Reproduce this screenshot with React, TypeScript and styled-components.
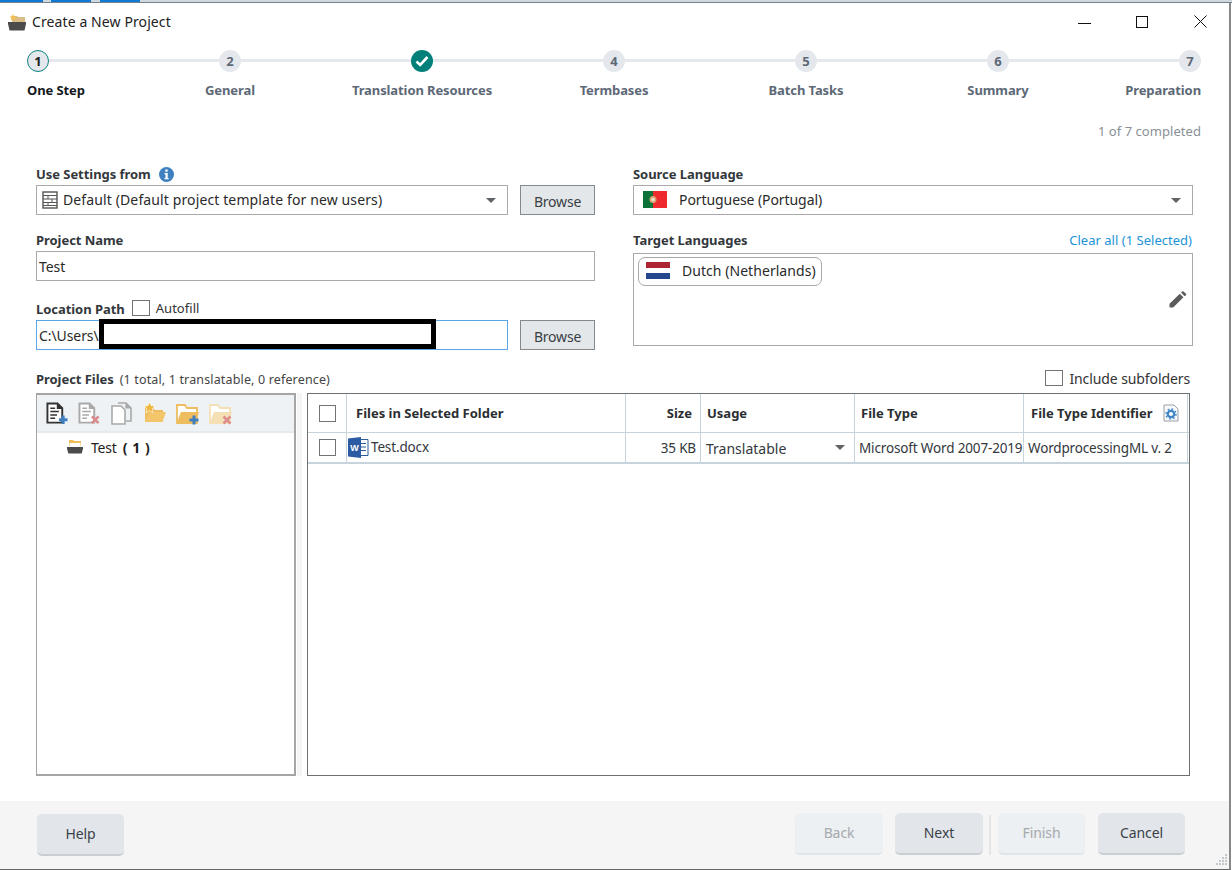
import React from "react";
import styled, { createGlobalStyle } from "styled-components";

const Global = createGlobalStyle`
  html, body { margin: 0; padding: 0; background: #fff; }
  body { font-family: "Noto Sans", "Open Sans", "Liberation Sans", sans-serif; font-size: 14px; color: #222; overflow: hidden; }
  * { box-sizing: border-box; }
`;

const Win = styled.div`
  width: 1232px; height: 870px; display: flex; flex-direction: column; background: #fff;
`;
const TaskStrip = styled.div`
  height: 3px; flex: none; display: flex; background: #cfd8de; border-bottom: 1px solid #77838c;
`;
const TaskTab = styled.span<{ $w: number; $gap: number }>`
  width: ${p => p.$w}px; margin-right: ${p => p.$gap}px; background: #0f78d2;
`;
const Frame = styled.div`
  flex: 1; display: flex; flex-direction: column; border-right: 2px solid #888; border-bottom: 1px solid #666; height: 866px; width: 1231px;
`;
const TitleBar = styled.div`
  height: 37px; flex: none; display: flex; align-items: center; padding-left: 8px;
`;
const TitleText = styled.span`
  margin-left: 6px; font-size: 14px; letter-spacing: 0.1px; color: #222;
`;
const WinControls = styled.div`margin-left: auto; display: flex;`;
const WinBtn = styled.div`
  width: 58px; height: 37px; display: flex; align-items: center; justify-content: center;
`;
const Stepper = styled.div`
  margin: 10px 28px 0 27px; display: flex; justify-content: space-between; position: relative;
  &::before { content: ""; position: absolute; left: 10px; right: 10px; top: 9px; height: 3px; background: #e5e9ed; }
`;
const Step = styled.div<{ $align: string }>`
  width: 22px; display: flex; flex-direction: column; align-items: ${p => p.$align}; position: relative;
`;
const Dot = styled.div<{ $state: "active" | "done" | "todo" }>`
  width: 22px; height: 22px; border-radius: 50%; display: flex; align-items: center; justify-content: center;
  font-weight: 700; font-size: 13px;
  background: ${p => (p.$state === "done" ? "#01807a" : "#e4e8ec")};
  color: ${p => (p.$state === "active" ? "#222" : "#5d6876")};
  border: ${p => (p.$state === "active" ? "1.5px solid #0d8480" : "none")};
`;
const StepLabel = styled.div<{ $on: boolean }>`
  margin-top: 8px; line-height: 20px; font-size: 13px; font-weight: 700; white-space: nowrap; letter-spacing: -0.1px;
  color: ${p => (p.$on ? "#15181c" : "#5d6876")};
`;
const Progress = styled.div`
  margin: 21px 28px 0 0; text-align: right; line-height: 20px; font-size: 13px; color: #8a8f95; letter-spacing: 0.05px;
`;
const Form = styled.div`
  margin-top: 23px; padding-left: 36px; display: grid; grid-template-columns: 559px 560px; column-gap: 38px;
`;
const Col = styled.div`display: flex; flex-direction: column;`;
const Label = styled.div`
  font-size: 13px; font-weight: 700; line-height: 20px; color: #33373b; letter-spacing: -0.05px; display: flex; align-items: center; white-space: nowrap;
`;
const LabelRow = styled.div<{ $top: number; $bottom?: number }>`
  display: flex; align-items: center; justify-content: space-between; height: 20px; flex: none;
  margin-top: ${p => p.$top}px; margin-bottom: ${p => p.$bottom ?? 1}px;
`;
const LinkText = styled.span`font-size: 13px; color: #1b93d8; letter-spacing: 0.02px; margin-right: 1px;`;
const FieldRow = styled.div`display: flex; gap: 12px;`;
const Field = styled.div<{ $focus?: boolean; $grow?: boolean }>`
  flex: ${p => (p.$grow ? "1" : "none")}; height: 30px; display: flex; align-items: center; padding: 0 2px; background: #fff; position: relative;
  border: 1px solid ${p => (p.$focus ? "#5aa5e6" : "#a9a9a9")}; font-size: 14px; letter-spacing: -0.08px; color: #2a2a2a; white-space: nowrap;
`;
const SelectText = styled.span<{ $left: number; $wide?: boolean }>`
  margin-left: ${p => p.$left}px; display: flex; padding-bottom: 2px; letter-spacing: ${p => (p.$wide ? "0.12px" : "inherit")};
`;
const UsageText = styled.span`padding-top: 2px;`;
const Caret = styled.span`
  margin-left: auto; margin-right: 9px; width: 0; height: 0;
  border-left: 5px solid transparent; border-right: 5px solid transparent; border-top: 5px solid #606468;
`;
const Browse = styled.div`
  width: 75px; height: 30px; flex: none; display: flex; align-items: center; justify-content: center;
  background: #e3e7ea; border: 1px solid #85898c; font-size: 14px; letter-spacing: -0.2px; color: #3a3f44; padding-top: 2px;
`;
const Redaction = styled.div`
  position: absolute; left: 62px; top: -2px; width: 337px; height: 30px; border: 5px solid #000; background: #fff;
`;
const Check = styled.span<{ $w?: number; $h?: number }>`
  display: inline-block; flex: none; width: ${p => p.$w ?? 18}px; height: ${p => p.$h ?? 16}px; background: #fff; border: 1px solid #737373;
`;
const Autofill = styled.div`display: flex; align-items: center; gap: 6px; margin-left: 7px; font-size: 13px; font-weight: 400; letter-spacing: 0.05px; color: #333; height: 18px; margin-top: -3px;`;
const TargetBox = styled.div`
  height: 93px; border: 1px solid #a9a9a9; padding: 3px 4px; position: relative; flex: none;
`;
const Chip = styled.div`
  width: 184px; height: 29px; border: 1px solid #a9a9a9; border-radius: 7px; display: flex; align-items: center; padding: 0 0 2px 7px; font-size: 14px; letter-spacing: 0.05px; color: #2a2a2a; gap: 12px;
`;
const PencilSlot = styled.div`position: absolute; right: 5px; top: 37px;`;
const FilesHead = styled.div`
  margin-top: 19px; padding: 0 39px 0 36px; height: 20px; display: flex; align-items: center; flex: none;
`;
const FilesSub = styled.span`margin-left: 6px; font-size: 12.5px; letter-spacing: 0.15px; color: #444;`;
const IncludeSub = styled.div`
  margin-left: auto; display: flex; align-items: center; gap: 6px; padding-bottom: 2px; font-size: 14px; letter-spacing: -0.1px; color: #333;
`;
const Panels = styled.div`margin-top: 4px; padding-left: 36px; display: flex; height: 383px; flex: none;`;
const TreePanel = styled.div`width: 260px; border: 2px solid #a5a5a5; border-left-width: 1px; display: flex; flex-direction: column;`;
const Splitter = styled.div`width: 11px; padding: 0 5px 0 1px; &::after { content: ""; display: block; height: 100%; background: #f5f5f5; }`;
const TreeToolbar = styled.div`
  height: 38px; flex: none; background: #eff2f5; border-bottom: 2px solid #e5eaee; display: flex; align-items: center; padding-left: 9px; gap: 10px;
`;
const TreeRow = styled.div`
  margin-top: 4px; height: 20px; padding-left: 29px; display: flex; align-items: center; gap: 7px; font-size: 14px; letter-spacing: -0.2px; color: #222;
`;
const TreeCount = styled.b`margin-left: -1px; color: #1d1d1d; letter-spacing: 0.6px;`;
const TablePanel = styled.div`width: 883px; border: 1px solid #707070; display: flex; flex-direction: column;`;
const GridRow = styled.div<{ $h: number; $bb: number }>`
  display: grid; grid-template-columns: 39px 279px 75px 154px 169px 164px; height: ${p => p.$h}px; flex: none;
  border-bottom: ${p => p.$bb}px solid #c7d4dc;
`;
const Cell = styled.div<{ $right?: number; $pad?: number; $head?: boolean; $center?: boolean; $big?: boolean }>`
  border-right: 1px solid #c7d4dc; display: flex; align-items: center; min-width: 0; white-space: nowrap;
  padding: 0 ${p => p.$right ?? 0}px 0 ${p => p.$pad ?? 4}px;
  justify-content: ${p => (p.$right ? "flex-end" : p.$center ? "center" : "flex-start")};
  font-size: ${p => (p.$head ? 13 : p.$big ? 14 : 13.5)}px; font-weight: ${p => (p.$head ? 700 : 400)};
  color: ${p => (p.$head ? "#2b2e31" : "#33383d")}; letter-spacing: ${p => (p.$head ? 0 : p.$big ? 0 : -0.15)}px;
`;
const HeadGear = styled.span`margin-left: 10px; display: flex;`;
const Spacer = styled.div`flex: 1;`;
const Footer = styled.div`
  height: 68px; flex: none; background: #f5f5f5; display: flex; align-items: flex-start; padding: 12px 0 0 37px; position: relative;
`;
const FootBtn = styled.div<{ $off?: boolean; $mr?: number; $down?: boolean; $w?: number }>`
  width: ${p => p.$w ?? 88}px; height: 42px; border-radius: 5px; display: flex; align-items: center; justify-content: center; font-size: 14px; letter-spacing: -0.1px;
  margin-right: ${p => p.$mr ?? 0}px; margin-top: ${p => (p.$down ? 1 : 0)}px; padding-bottom: 2px;
  background: ${p => (p.$off ? "#edf0f2" : "#e2e6ea")};
  color: ${p => (p.$off ? "#a5a9ae" : "#3a4048")};
  border-bottom: 2px solid ${p => (p.$off ? "#e2e5e8" : "#c9ced3")};
`;
const FootGroup = styled.div`margin-left: auto; margin-right: 44px; display: flex; align-items: flex-start;`;
const FootSep = styled.div`width: 2px; height: 40px; margin: 2px 7px 0 6px; background: #e3e6e8;`;
const Grip = styled.svg`position: absolute; right: 1px; bottom: 2px;`;

const Basket = () => (
  <svg width="18" height="18" viewBox="0 0 18 18">
    <path d="M4 3h5l1 1h7v6H4z" fill="#d9bd85" />
    <path d="M5 1l1 2.300 2.500.2-1.900 1.600.6 2.500-2.200-1.300-2.200 1.300.6-2.500L1.500 3.500 4 3.300z" fill="#efbe4e" />
    <path d="M0 9h18v1.800l-1.500 6.700H1.500L0 10.800z" fill="#4b4b4b" />
  </svg>
);
const FolderStack = () => (
  <svg width="18" height="16" viewBox="0 0 18 16">
    <path d="M3 1h4l1 1h7v5H3z" fill="#f0bd58" />
    <path d="M3.500 4h11v3h-11z" fill="#fff" />
    <path d="M1 8h16v1.500l-1.300 5H2.300L1 9.500z" fill="#4b4b4b" />
  </svg>
);
const DocBase = ({ c }: { c: string }) => (
  <>
    <path d="M1.500 1h10.500l5 5v15H1.500z" fill="#fff" stroke={c} strokeWidth="2" />
    <path d="M12 1v5h5" fill={c} stroke={c} strokeWidth="1.400" />
    <path d="M4.500 6h5M4.500 9.500h9M4.500 13h7M4.500 16.500h5" stroke={c} strokeWidth="1.500" />
  </>
);
const Plus = ({ x, y }: { x: number; y: number }) => (
  <path d={`M${x + 3} ${y}h3v3h3v3h-3v3h-3v-3h-3v-3h3z`} fill="#3f7fc0" />
);
const Cross = ({ x, y, c }: { x: number; y: number; c: string }) => (
  <path d={`M${x + 1} ${y + 1}l7 7M${x + 8} ${y + 1}l-7 7`} stroke={c} strokeWidth="2.600" />
);
const NewDocIcon = () => (
  <svg width="22" height="23" viewBox="0 0 23 23"><DocBase c="#333" /><Plus x={13.500} y={13.500} /></svg>
);
const DelDocIcon = () => (
  <svg width="22" height="23" viewBox="0 0 23 23"><DocBase c="#a9a9a9" /><Cross x={13.500} y={13.500} c="#d98a8a" /></svg>
);
const CopyDocIcon = () => (
  <svg width="23" height="23" viewBox="0 0 23 23">
    <path d="M8 1h8l5 5v13h-5" fill="none" stroke="#a9a9a9" strokeWidth="1.600" />
    <path d="M2 4h9l4 4v14H2z" fill="#fff" stroke="#a9a9a9" strokeWidth="1.600" />
    <path d="M16 1v5h5" fill="#a9a9a9" stroke="#a9a9a9" strokeWidth="1.200" />
  </svg>
);
const FolderShape = ({ c, bg }: { c: string; bg: string }) => (
  <>
    <path d="M1 3h8l2 3h10v15H1z" fill={bg} stroke={c} strokeWidth="1.800" />
    <path d="M1 20L5 10h18l-3 10z" fill={c} />
  </>
);
const StarFolderIcon = () => (
  <svg width="23" height="22" viewBox="0 0 23 22">
    <path d="M2 6h8l2 2h8v12H2z" fill="#eebd60" />
    <path d="M2 20L6 10h17l-3.500 10z" fill="#f3c66c" />
    <path d="M6.500 0l1.700 3.700 4 .4-3 2.700.9 3.900-3.600-2.100-3.500 2.100.9-3.900-3-2.700 4-.4z" fill="#eeb83e" stroke="#fff" strokeWidth=".600" />
  </svg>
);
const AddFolderIcon = () => (
  <svg width="23" height="23" viewBox="0 0 23 23"><FolderShape c="#eebd60" bg="#fff" /><Plus x={13.500} y={13.500} /></svg>
);
const DelFolderIcon = () => (
  <svg width="23" height="23" viewBox="0 0 23 23"><FolderShape c="#f5dfb4" bg="#fff" /><Cross x={13.500} y={13.500} c="#dc8d8d" /></svg>
);
const WordIcon = () => (
  <svg width="21" height="21" viewBox="0 0 21 21">
    <path d="M9 2.500h11v16H9z" fill="#fff" stroke="#2e5b9a" />
    <path d="M13 6.500h5M13 10h5M13 13.500h5" stroke="#2e5b9a" />
    <path d="M0 1.500l13-1.500v21l-13-1.500z" fill="#2d5ba3" />
    <text x="6.500" y="13.500" fontSize="9" fontWeight="700" fill="#fff" textAnchor="middle" fontFamily="Liberation Sans">W</text>
  </svg>
);
const GearDoc = () => (
  <svg width="16" height="18" viewBox="0 0 16 18">
    <path d="M1 1h10l4 4v12H1z" fill="#f7f9fb" stroke="#9aa0a6" />
    <circle cx="8" cy="10" r="3.200" fill="none" stroke="#3f85c5" strokeWidth="2.200" />
    <circle cx="8" cy="10" r="5" fill="none" stroke="#3f85c5" strokeWidth="1.400" strokeDasharray="1.800 2.100" />
  </svg>
);
const TemplateIcon = () => (
  <svg width="16" height="18" viewBox="0 0 16 18" style={{ marginLeft: 3 }}>
    <rect x="1" y="1" width="14" height="16" fill="#fff" stroke="#555" strokeWidth="1.400" />
    <path d="M1 4.500h14M1 8h14M1 11.500h14M1 14.500h14M6 4.500V8M10 8v3.500M6 11.500v3" stroke="#555" />
  </svg>
);
const InfoIcon = () => (
  <svg width="15" height="15" viewBox="0 0 15 15" style={{ marginLeft: 8 }}>
    <circle cx="7.500" cy="7.500" r="7.500" fill="#3f80c0" />
    <rect x="6.300" y="2.500" width="2.400" height="2.200" fill="#fff" />
    <path d="M5.500 6h3.200v5h1v1.300H5.500V11h1V7.300h-1z" fill="#fff" />
  </svg>
);
const PtFlag = () => (
  <svg width="24" height="17" viewBox="0 0 24 17">
    <rect width="10" height="17" fill="#0e7338" />
    <rect x="10" width="14" height="17" fill="#ee2a2e" />
    <circle cx="10" cy="8.500" r="3.500" fill="#d9a06a" />
    <circle cx="10" cy="8.500" r="1.800" fill="#e9e3d6" />
  </svg>
);
const NlFlag = () => (
  <svg width="24" height="17" viewBox="0 0 24 17">
    <rect width="24" height="6" fill="#ad2433" />
    <rect y="6" width="24" height="5" fill="#fff" />
    <rect y="11" width="24" height="6" fill="#25478c" />
  </svg>
);
const Pencil = () => (
  <svg width="18" height="17" viewBox="0 0 18 17">
    <path d="M0.500 16.500V12.800L10.800 2.800 14.400 6.300 4.200 16.500z" fill="#5c5c5c" />
    <path d="M12 1.600l1.200-1.100a1 1 0 0 1 1.400 0l2.300 2.300a1 1 0 0 1 0 1.400L15.600 5.300z" fill="#5c5c5c" />
  </svg>
);

const steps = ["One Step", "General", "Translation Resources", "Termbases", "Batch Tasks", "Summary", "Preparation"];

export default function App() {
  return (
    <Win>
      <Global />
      <TaskStrip>
        <TaskTab $w={43} $gap={8} />
        <TaskTab $w={40} $gap={9} />
        <TaskTab $w={40} $gap={0} />
      </TaskStrip>
      <Frame>
        <TitleBar>
          <Basket />
          <TitleText>Create a New Project</TitleText>
          <WinControls>
            <WinBtn><svg width="13" height="13" viewBox="0 0 13 13"><path d="M0 8.500h13" stroke="#111" /></svg></WinBtn>
            <WinBtn><svg width="12" height="12" viewBox="0 0 12 12"><rect x=".5" y=".5" width="11" height="11" fill="none" stroke="#111" /></svg></WinBtn>
            <WinBtn><svg width="13" height="13" viewBox="0 0 13 13"><path d="M.5.500l12 12M12.500.500l-12 12" stroke="#111" /></svg></WinBtn>
          </WinControls>
        </TitleBar>
        <Stepper>
          {steps.map((s, i) => {
            const state = i === 0 ? "active" : i === 2 ? "done" : "todo";
            return (
              <Step key={s} $align={i === 0 ? "flex-start" : i === 6 ? "flex-end" : "center"}>
                <Dot $state={state}>
                  {i === 2 ? (
                    <svg width="14" height="12" viewBox="0 0 14 12"><path d="M1.500 6.500l3.700 3.500 7.300-8" fill="none" stroke="#fff" strokeWidth="2.600" /></svg>
                  ) : i + 1}
                </Dot>
                <StepLabel $on={i === 0}>{s}</StepLabel>
              </Step>
            );
          })}
        </Stepper>
        <Progress>1 of 7 completed</Progress>
        <Form>
          <Col>
            <LabelRow $top={0}><Label>Use Settings from<InfoIcon /></Label></LabelRow>
            <FieldRow>
              <Field $grow>
                <TemplateIcon />
                <SelectText $left={5} $wide>Default (Default project template for new users)</SelectText>
                <Caret />
              </Field>
              <Browse>Browse</Browse>
            </FieldRow>
            <LabelRow $top={15}><Label>Project Name</Label></LabelRow>
            <Field>Test</Field>
            <LabelRow $top={18}>
              <Label>Location Path<Autofill><Check />Autofill</Autofill></Label>
            </LabelRow>
            <FieldRow>
              <Field $grow $focus>C:\Users\<Redaction /></Field>
              <Browse>Browse</Browse>
            </FieldRow>
          </Col>
          <Col>
            <LabelRow $top={0}><Label>Source Language</Label></LabelRow>
            <Field>
              <SelectText $left={7}><PtFlag /></SelectText>
              <SelectText $left={12}>Portuguese (Portugal)</SelectText>
              <Caret />
            </Field>
            <LabelRow $top={15} $bottom={3}>
              <Label>Target Languages</Label>
              <LinkText>Clear all (1 Selected)</LinkText>
            </LabelRow>
            <TargetBox>
              <Chip><NlFlag />Dutch (Netherlands)</Chip>
              <PencilSlot><Pencil /></PencilSlot>
            </TargetBox>
          </Col>
        </Form>
        <FilesHead>
          <Label>Project Files</Label>
          <FilesSub>(1 total, 1 translatable, 0 reference)</FilesSub>
          <IncludeSub><Check />Include subfolders</IncludeSub>
        </FilesHead>
        <Panels>
          <TreePanel>
            <TreeToolbar>
              <NewDocIcon /><DelDocIcon /><CopyDocIcon /><StarFolderIcon /><AddFolderIcon /><DelFolderIcon />
            </TreeToolbar>
            <TreeRow><FolderStack />Test<TreeCount>( 1 )</TreeCount></TreeRow>
          </TreePanel>
          <Splitter />
          <TablePanel>
            <GridRow $h={39} $bb={1}>
              <Cell $center $pad={0}><Check $w={17} $h={17} /></Cell>
              <Cell $head $pad={9}>Files in Selected Folder</Cell>
              <Cell $head $right={8}>Size</Cell>
              <Cell $head $pad={6}>Usage</Cell>
              <Cell $head $pad={6}>File Type</Cell>
              <Cell $head $pad={7}>File Type Identifier<HeadGear><GearDoc /></HeadGear></Cell>
            </GridRow>
            <GridRow $h={31} $bb={2}>
              <Cell $center $pad={0}><Check $w={17} $h={17} /></Cell>
              <Cell $pad={1}><WordIcon /><SelectText $left={2}>Test.docx</SelectText></Cell>
              <Cell $right={4}>35 KB</Cell>
              <Cell $pad={5} $big><UsageText>Translatable</UsageText><Caret /></Cell>
              <Cell>Microsoft Word 2007-2019</Cell>
              <Cell>WordprocessingML v. 2</Cell>
            </GridRow>
          </TablePanel>
        </Panels>
        <Spacer />
        <Footer>
          <FootBtn $down $w={87}>Help</FootBtn>
          <FootGroup>
            <FootBtn $off $mr={12}>Back</FootBtn>
            <FootBtn>Next</FootBtn>
            <FootSep />
            <FootBtn $off $mr={13} $w={87}>Finish</FootBtn>
            <FootBtn $w={87}>Cancel</FootBtn>
          </FootGroup>
          <Grip width="14" height="14" viewBox="0 0 14 14" fill="#c4c7ca">
            {[[11, 1], [11, 4], [8, 4], [11, 7], [8, 7], [5, 7], [11, 10], [8, 10], [5, 10], [2, 10]].map(([x, y]) => (
              <rect key={`${x}-${y}`} x={x} y={y} width="2" height="2" />
            ))}
          </Grip>
        </Footer>
      </Frame>
    </Win>
  );
}
